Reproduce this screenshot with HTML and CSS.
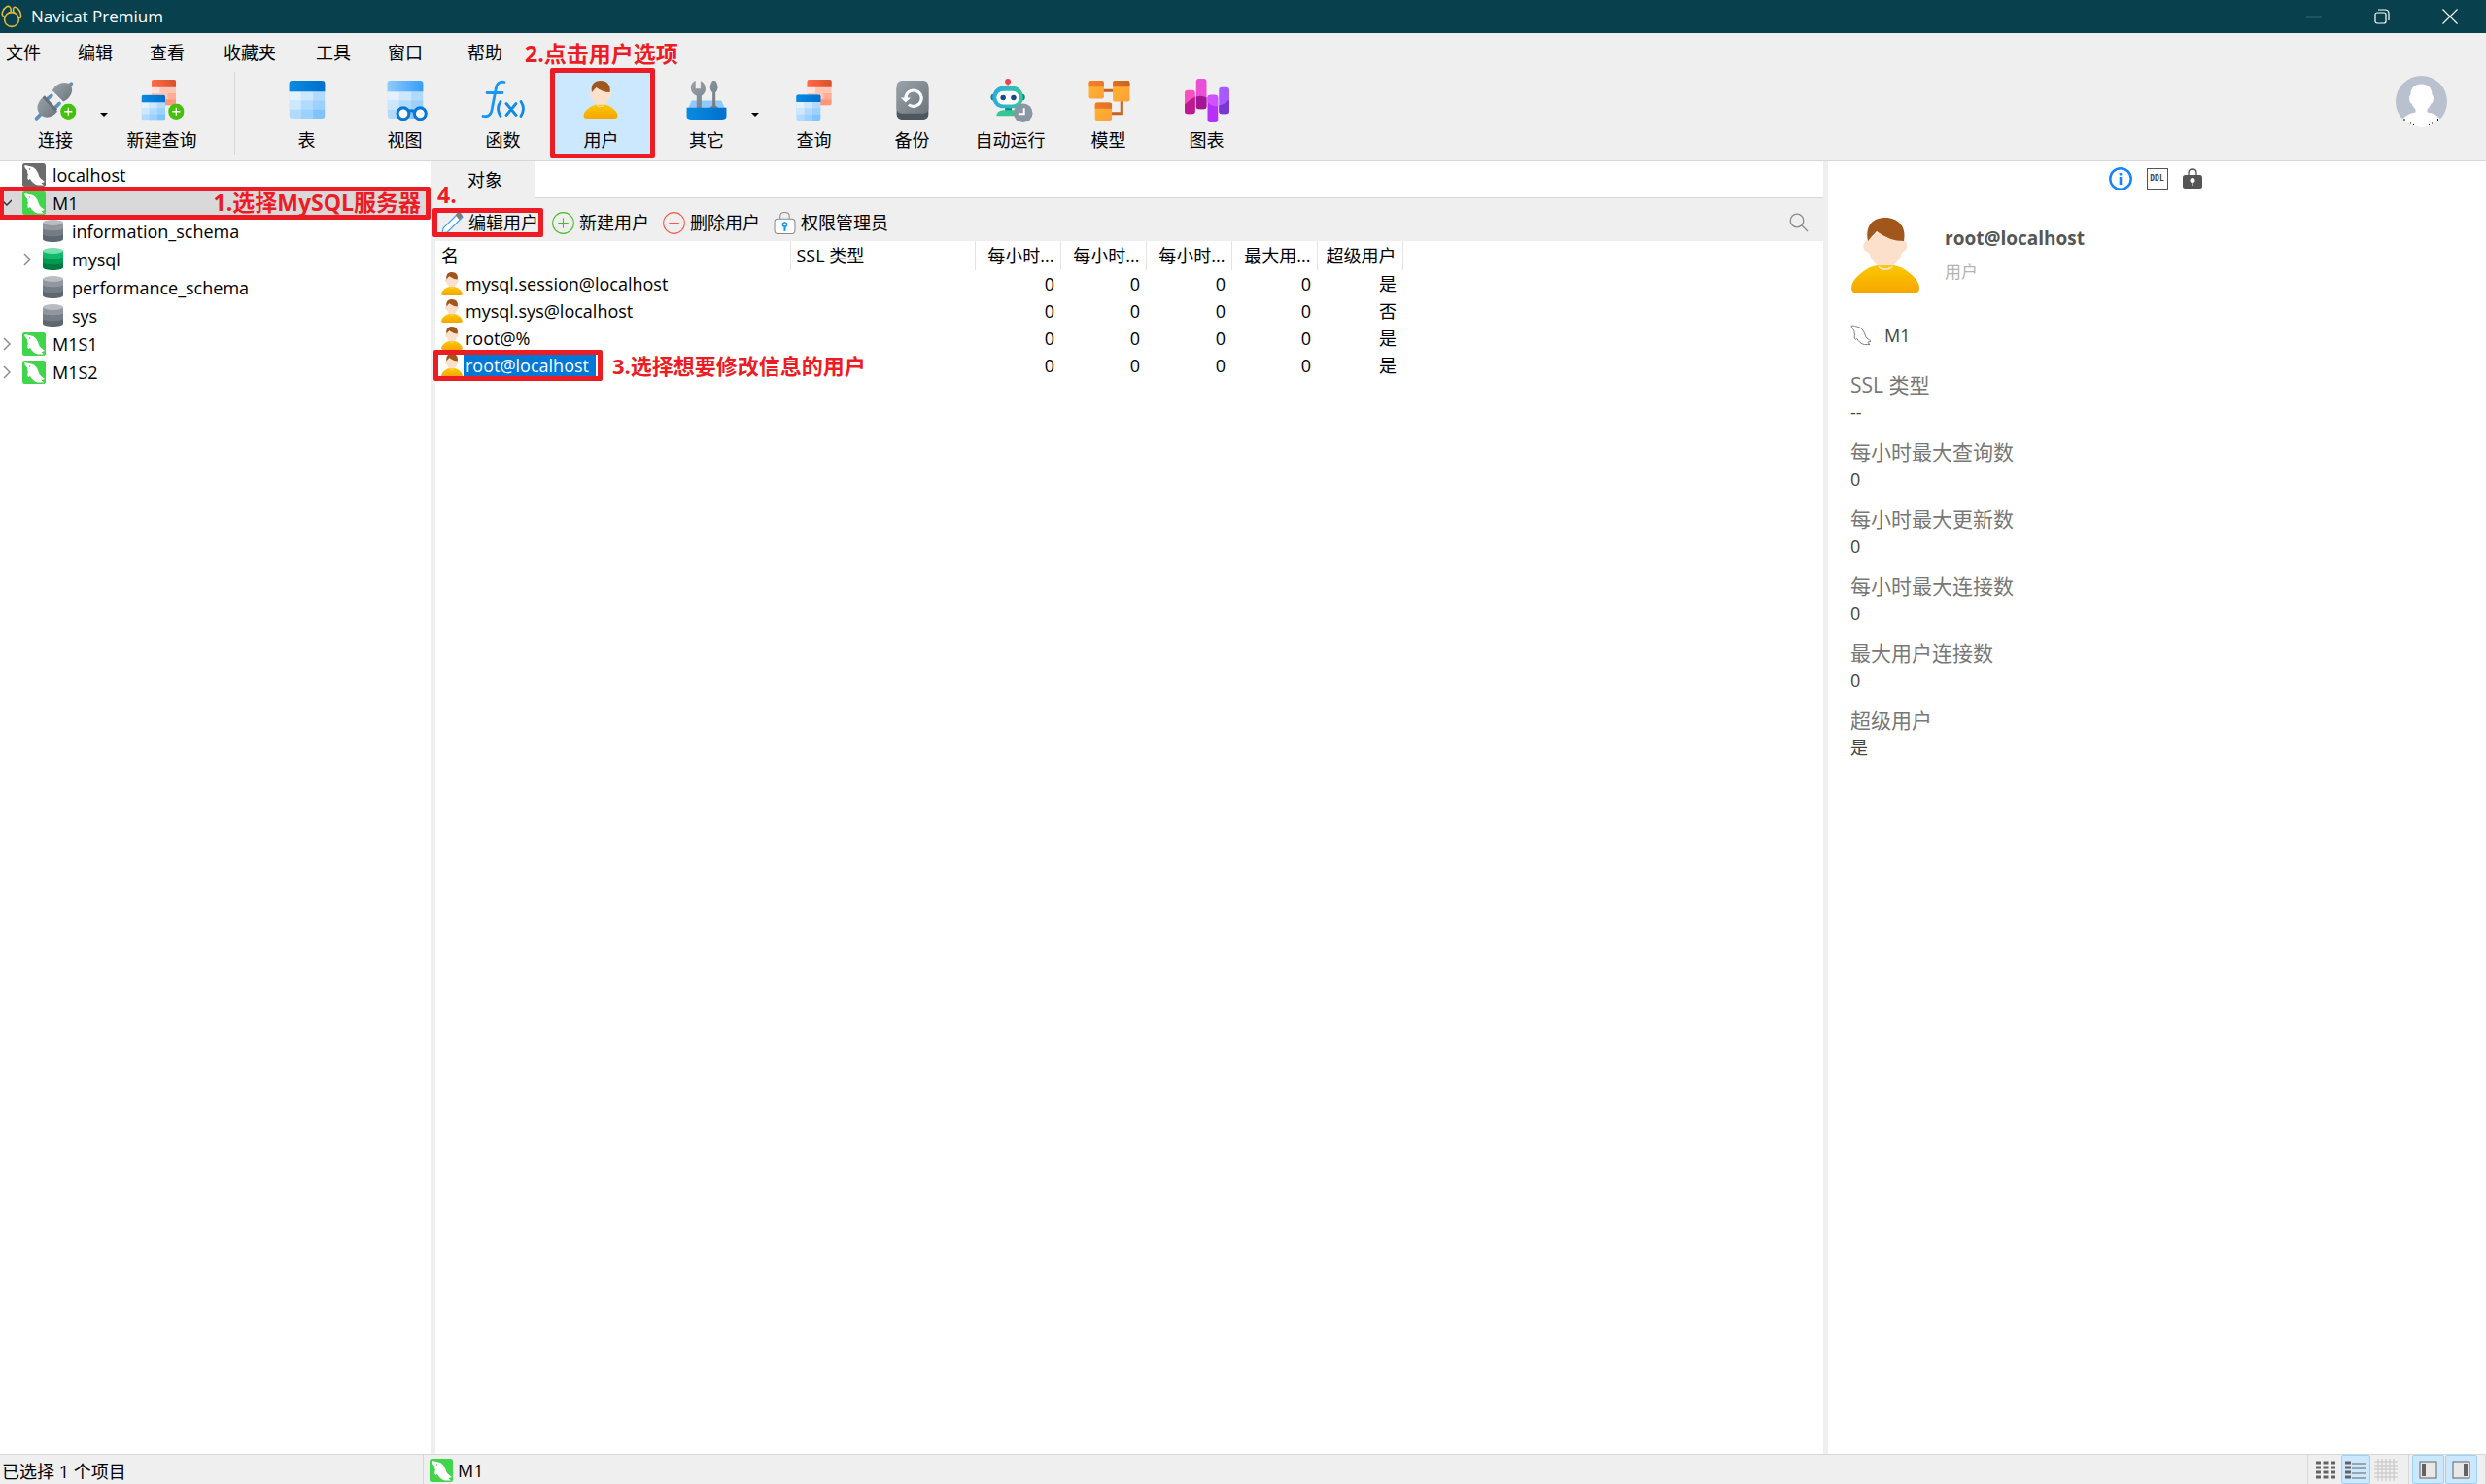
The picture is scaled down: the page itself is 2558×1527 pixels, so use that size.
FILE: index.html
```html
<!DOCTYPE html>
<html lang="zh-CN">
<head>
<meta charset="utf-8">
<title>Navicat Premium</title>
<link rel="stylesheet" href="styles.css">
</head>
<body>
<svg class="defs" aria-hidden="true">
  <defs>
    <linearGradient id="g-gray" x1="0" y1="0" x2="1" y2="1"><stop offset="0" stop-color="#9aa2aa"/><stop offset="1" stop-color="#6d757d"/></linearGradient>
    <linearGradient id="g-blue" x1="0" y1="0" x2="1" y2="0"><stop offset="0" stop-color="#0a8ae0"/><stop offset="1" stop-color="#0070cc"/></linearGradient>
    <linearGradient id="g-sky" x1="0" y1="0" x2="1" y2="0"><stop offset="0" stop-color="#90cafc"/><stop offset="1" stop-color="#369efa"/></linearGradient>
    <linearGradient id="g-red" x1="0" y1="0" x2="1" y2="0"><stop offset="0" stop-color="#ff6b47"/><stop offset="1" stop-color="#d9502c"/></linearGradient>
    <linearGradient id="g-shirt" x1="0" y1="0" x2="0" y2="1"><stop offset="0" stop-color="#fcc800"/><stop offset="1" stop-color="#f5a500"/></linearGradient>
    <linearGradient id="g-robot" x1="0" y1="0" x2="1" y2="0"><stop offset="0" stop-color="#2cabe2"/><stop offset="1" stop-color="#37c69a"/></linearGradient>
    <linearGradient id="g-orange" x1="0" y1="0" x2="1" y2="1"><stop offset="0" stop-color="#ffb62e"/><stop offset="1" stop-color="#ff9f3a"/></linearGradient>
    <linearGradient id="g-rust" x1="0" y1="0" x2="1" y2="0"><stop offset="0" stop-color="#f87f2b"/><stop offset="1" stop-color="#c9651f"/></linearGradient>
    <clipPath id="c-table"><rect width="36" height="38" rx="3"/></clipPath>
  </defs>
  <symbol id="i-logo" viewBox="0 0 22 24"><g fill="none" stroke="#e3b93c" stroke-width="1.6" stroke-linecap="round"><circle cx="11" cy="15" r="7.4"/><path d="M3 12C0 11 1 5 5 2.500C8 0 11 2 10 7.500M13 7.500C12 4 13 1.500 15 2.500C18 3 21 8 20.500 12.500C20 14 19 13.500 18.500 13"/></g></symbol>
  <symbol id="i-cells" viewBox="0 0 36 38"><g clip-path="url(#c-table)"><path fill="#b0dbff" d="M0 0h36v38H0z"/><path fill="#e4f2ff" d="M0 11h12v9H0z"/><path fill="#cde7ff" d="M12 11h12v9H12zM0 20h12v9H0z"/><path fill="#9cd0ff" d="M24 20h12v9H24zM12 29h12v9H12z"/><path fill="#7fc3ff" d="M24 29h12v9H24z"/></g></symbol>
  <symbol id="i-table" viewBox="0 0 36 38"><use href="#i-cells"/><path fill="url(#g-blue)" d="M0 11V3q0-3 3-3h30q3 0 3 3v8z"/></symbol>
  <symbol id="i-redtable" viewBox="0 0 36 38"><g clip-path="url(#c-table)"><path fill="#ffc5b5" d="M0 0h36v38H0z"/><path fill="#ffe4dd" d="M0 11h12v9H0z"/><path fill="#ffad97" d="M24 20h12v9H24z"/><path fill="#ff9678" d="M12 29h24v9H12z"/></g><path fill="url(#g-red)" d="M0 11V3q0-3 3-3h30q3 0 3 3v8z"/></symbol>
  <symbol id="i-plusdot" viewBox="0 0 16 16"><circle cx="8" cy="8" r="8" fill="#43c10b"/><path d="M8 4v8M4 8h8" stroke="#fff" stroke-width="1.300"/></symbol>
  <symbol id="i-connect" viewBox="0 0 44 44"><g transform="translate(1,1)"><g stroke="#5d93b9" stroke-width="3.600" stroke-linecap="round"><path d="M2 39l6-6M31 10l6-6M12 20l5-4M21 28l4-4"/></g><path fill="url(#g-gray)" d="M18 11C22 3 31 1 36 5c4 5 1 13-7 17z"/><path fill="url(#g-gray)" d="M9 17l14 15c-5 6-12 8-17 3S2 23 9 17z"/><path stroke="#68717a" stroke-width="3" d="M9 17l13 14"/></g><use href="#i-plusdot" x="27" y="25" width="16" height="16"/></symbol>
  <symbol id="i-newquery" viewBox="0 0 44 44"><use href="#i-redtable" x="11" y="1" width="25" height="26"/><use href="#i-table" x="1" y="16" width="24" height="26"/><use href="#i-plusdot" x="28" y="25" width="16" height="16"/></symbol>
  <symbol id="i-query" viewBox="0 0 44 44"><use href="#i-redtable" x="14" y="1" width="26" height="26"/><use href="#i-table" x="3" y="16" width="26" height="26"/></symbol>
  <symbol id="i-tables" viewBox="0 0 44 44"><use href="#i-table" x="3" y="2" width="38" height="38"/></symbol>
  <symbol id="i-view" viewBox="0 0 44 44"><use href="#i-cells" x="4" y="2" width="36" height="38"/><path fill="url(#g-sky)" d="M4 13V5q0-3 3-3h30q3 0 3 3v8z"/><g fill="#fff" stroke="#0878d6" stroke-width="3"><circle cx="20" cy="35" r="5.800"/><circle cx="37" cy="35" r="5.800"/><path d="M25 33q3-2 6 0"/></g></symbol>
  <symbol id="i-func" viewBox="0 0 46 44"><g fill="none" stroke="#1696fa" stroke-width="2.800" stroke-linecap="round"><path d="M24 3c-5-1-8 1-9 8l-4 21c-1 5-4 7-9 6M6 14h16"/><path stroke="#108be6" d="M20 23q-5 7 0 15M41 23q5 7 0 15M26 25l10 12M36 25L26 37"/></g></symbol>
  <symbol id="i-user" viewBox="0 0 70 78"><path fill="url(#g-shirt)" d="M26 49h18c10 2 18 9 23 15q3 4 3 8 0 6-7 6H7q-7 0-7-6 0-4 3-8c5-6 13-13 23-15z"/><path fill="#fde0cb" d="M27 49h16q-1 5-8 5t-8-5zM17 23c-5 1-6 8-3 11l4 2c2 8 10 16 17 16s15-8 17-16l3-2c3-3 3-9-1-11L34 10z"/><path fill="#a1571c" d="M17 24C14 8 22 0 35 0s22 9 19 24q-15 0-28-10-4 4-9 10z"/></symbol>
  <symbol id="i-other" viewBox="0 0 44 44"><path fill="#90cafc" d="M7 22h30l4 9H3z"/><path fill="url(#g-gray)" d="M12 30V17C4 14 5 4 11 2v8h5V2c6 3 7 12 1 15v13zM28 22V14c-4-4-2-9 0-12h3c2 3 4 8 0 12v13q1 1 4 3H24q3-2 4-3z"/><path fill="url(#g-blue)" d="M2 29h40v9q0 3-4 3H6q-4 0-4-3z"/></symbol>
  <symbol id="i-backup" viewBox="0 0 44 44"><rect x="6" y="5" width="32" height="36" rx="5" fill="#4f575e"/><rect x="6" y="2" width="32" height="33" rx="5" fill="url(#g-gray)"/><path d="M15 20a8 8 0 1 1 3 6" fill="none" stroke="#fff" stroke-width="3"/><path fill="#fff" d="M10 19h10l-5 5z"/></symbol>
  <symbol id="i-auto" viewBox="0 0 46 46"><path stroke="#68717a" d="M20 5v5"/><circle cx="20" cy="3" r="3" fill="#ef3f4a"/><rect x="2" y="16" width="36" height="7" rx="3" fill="#078a84"/><path fill="#0b8982" d="M17 28h7v8h-7z"/><rect x="4" y="8" width="32" height="23" rx="11" fill="url(#g-robot)"/><rect x="8" y="13" width="24" height="14" rx="7" fill="#fff"/><circle cx="15" cy="20" r="2.800" fill="#164a80"/><circle cx="26" cy="20" r="2.800" fill="#164a80"/><path fill="#36c594" d="M8 39q0-5 7-6h12v6z"/><circle cx="36" cy="36" r="10" fill="#8997a5"/><path d="M37 31v6h-6" fill="none" stroke="#fff" stroke-width="2"/></symbol>
  <symbol id="i-model" viewBox="0 0 44 44"><path d="M15 12h12M35 22v13H22" stroke="#c4641e" stroke-width="3" fill="none"/><g fill="url(#g-orange)"><rect x="2" y="2" width="15" height="18" rx="2"/><rect x="26" y="2" width="17" height="21" rx="2"/><rect x="8" y="24" width="17" height="18" rx="2"/></g><g fill="url(#g-rust)"><path d="M2 8V4q0-2 2-2h11q2 0 2 2v4zM26 8V4q0-2 2-2h13q2 0 2 2v4zM8 30v-4q0-2 2-2h13q2 0 2 2v4z"/></g></symbol>
  <symbol id="i-chart" viewBox="0 0 47 46"><rect x="0" y="12" width="11" height="25" rx="3" fill="#fa4fc0"/><path fill="#bb1a90" d="M0 27Q5 22 11 19v15q0 3-3 3H3q-3 0-3-3z"/><rect x="12" y="0" width="11" height="32" rx="3" fill="#ea50d6"/><path fill="#a31593" d="M12 19q6-2 11 1v9q0 3-3 3h-5q-3 0-3-3z"/><rect x="24" y="17" width="11" height="29" rx="3" fill="#b82ff8"/><path fill="#d052ff" d="M24 25v-5q0-3 3-3h5q3 0 3 3v9q-6 0-11-4z"/><rect x="36" y="9" width="11" height="28" rx="3" fill="#a65aff"/><path fill="#7737d0" d="M36 28q6-1 11-6v12q0 3-3 3h-5q-3 0-3-3z"/></symbol>
  <symbol id="i-dolphin" viewBox="0 0 24 24"><path d="M2 2.500C3.500 1.800 5 2.200 7 3c3 .3 5.500 1.500 7 3.500 2 2.500 2.500 5 3.500 7.500 1 2 3.500 3 5.500 5l-3.500 1.300L22 22.500c-2 .3-4-.3-6 0-3.500-.8-6-3-8-6.500-.6 0-.8 1-1.500 1-1.500-.5-1.500-3.500-.5-5.500C4.800 10.500 5.500 9 5 7.500 4 6 2.500 5 2 2.500z"/></symbol>
  <symbol id="i-server" viewBox="0 0 24 24"><rect width="24" height="24" rx="2.500" fill="currentColor"/><use href="#i-dolphin" fill="#fff"/><circle cx="7.500" cy="6" r=".8" fill="currentColor"/></symbol>
  <symbol id="i-db" viewBox="0 0 21 23"><path fill="#5e676f" d="M0 14h21v6c0 4-21 4-21 0z"/><path fill="#747d86" d="M0 8h21v7c0 3-21 3-21 0z"/><path fill="#92979f" d="M0 3h21v6c0 3-21 3-21 0z"/><ellipse cx="10.500" cy="3" rx="10.500" ry="3" fill="#b8bdc4"/></symbol>
  <symbol id="i-dbon" viewBox="0 0 21 23"><path fill="#007a3f" d="M0 14h21v6c0 4-21 4-21 0z"/><path fill="#009a52" d="M0 8h21v7c0 3-21 3-21 0z"/><path fill="#12b96a" d="M0 3h21v6c0 3-21 3-21 0z"/><ellipse cx="10.500" cy="3" rx="10.500" ry="3" fill="#78dfae"/></symbol>
  <symbol id="i-right" viewBox="0 0 10 16"><path d="M2 2l6 6-6 6" fill="none" stroke="#909090" stroke-width="1.500"/></symbol>
  <symbol id="i-down" viewBox="0 0 10 16"><path d="M0 5l5 5 5-5" fill="none" stroke="#333" stroke-width="1.500"/></symbol>
  <symbol id="i-pencil" viewBox="0 0 22 22"><path d="M1 21l1-5L17 1l4 4L6 20z" fill="#fff" stroke="#3ea2f5" stroke-width="1.200"/><path fill="#7d7d7d" d="M14 3l3-3q3 1 4 4l-3 4z"/></symbol>
  <symbol id="i-add" viewBox="0 0 22 22"><g fill="none" stroke="#43c121"><circle cx="11" cy="11" r="10.400"/><path d="M11 6v10M6 11h10"/></g></symbol>
  <symbol id="i-del" viewBox="0 0 22 22"><g fill="none" stroke="#fa5a4c"><circle cx="11" cy="11" r="10.400"/><path d="M6 11h10"/></g></symbol>
  <symbol id="i-priv" viewBox="0 0 22 22"><path d="M6.500 7V4q0-3.500 4.500-3.500T15.500 4v3" fill="none" stroke="#8b8b8b"/><rect x="1" y="7" width="20" height="14.500" rx="3" fill="#fff" stroke="#8b8b8b"/><path d="M11 14v5" stroke="#1896fb" stroke-width="2"/><circle cx="11" cy="12.500" r="2" fill="none" stroke="#1896fb" stroke-width="1.500"/></symbol>
  <symbol id="i-search" viewBox="0 0 20 20"><g fill="none" stroke="#8a8a8a" stroke-width="1.300"><circle cx="8" cy="8" r="6.800"/><path d="M13 13l6 6"/></g></symbol>
  <symbol id="i-info" viewBox="0 0 24 24"><circle cx="12" cy="12" r="10.700" fill="none" stroke="#1684fc" stroke-width="2.500"/><path d="M12 10v8M12 6v2.500" stroke="#1684fc" stroke-width="2.600"/></symbol>
  <symbol id="i-lock" viewBox="0 0 20 22"><path d="M6 8V5q0-4 4-4t4 4v3" fill="none" stroke="#555" stroke-width="1.300"/><rect y="7" width="20" height="14" rx="2.500" fill="#555"/><circle cx="10" cy="12.500" r="2.500" fill="#fff"/><path d="M10 13v5" stroke="#fff"/></symbol>
</svg>

<div class="app">
  <header class="titlebar">
    <svg class="logo"><use href="#i-logo"/></svg>
    <h1 class="title">Navicat Premium</h1>
    <div class="window-controls">
      <button type="button" aria-label="最小化"><svg viewBox="0 0 16 16"><path d="M0 8.500h16"/></svg></button>
      <button type="button" aria-label="还原"><svg viewBox="0 0 16 16"><rect x="1" y="4" width="11" height="11" rx="2"/><path d="M4 1h7q4 0 4 4v7"/></svg></button>
      <button type="button" aria-label="关闭"><svg viewBox="0 0 16 16"><path d="M.5.5l15 15M15.500.5l-15 15"/></svg></button>
    </div>
  </header>

  <div class="ribbon">
    <div class="ribbon-main">
      <nav class="menubar">
        <button type="button">文件</button><button type="button">编辑</button><button type="button">查看</button><button type="button">收藏夹</button><button type="button">工具</button><button type="button">窗口</button><button type="button">帮助</button>
      </nav>
      <div class="toolbar">
        <div class="split">
          <button type="button" class="tool"><svg><use href="#i-connect"/></svg>连接</button>
          <button type="button" class="drop" aria-label="连接选项"></button>
        </div>
        <button type="button" class="tool"><svg><use href="#i-newquery"/></svg>新建查询</button>
        <span class="divider"></span>
        <button type="button" class="tool"><svg><use href="#i-tables"/></svg>表</button>
        <button type="button" class="tool"><svg><use href="#i-view"/></svg>视图</button>
        <button type="button" class="tool"><svg><use href="#i-func"/></svg>函数</button>
        <div class="marked">
          <button type="button" class="tool active"><svg><use href="#i-user" x="4" y="2" width="36" height="39"/></svg>用户</button>
          <span class="mark mark-user"></span>
          <span class="note note-user">2.点击用户选项</span>
        </div>
        <div class="split">
          <button type="button" class="tool"><svg><use href="#i-other"/></svg>其它</button>
          <button type="button" class="drop" aria-label="其它选项"></button>
        </div>
        <button type="button" class="tool"><svg><use href="#i-query"/></svg>查询</button>
        <button type="button" class="tool"><svg><use href="#i-backup"/></svg>备份</button>
        <button type="button" class="tool"><svg><use href="#i-auto"/></svg>自动运行</button>
        <button type="button" class="tool"><svg><use href="#i-model"/></svg>模型</button>
        <button type="button" class="tool"><svg><use href="#i-chart"/></svg>图表</button>
      </div>
    </div>
    <button type="button" class="account" aria-label="账户"><svg viewBox="0 0 53 53"><circle cx="26.500" cy="26.500" r="26.500" fill="#b9c1cf"/><path fill="#fff" d="M26.500 8.500c8 0 11 5 11 11 2 1 2 8-1 9-1 3-3 5-4 6v3c7 1 11 4 13.500 7a26.500 26.500 0 0 1-39 0c3-3 7-6 13.500-7v-3c-1-1-3-3-4-6-3-1-3-8-1-9 0-6 3-11 11-11z"/><path d="M9 44v2M43.500 44v2M15 49h1M18 50.500h1M34 50.500h1M37 49h1" stroke="#000"/></svg></button>
  </div>

  <div class="workspace">
    <aside class="sidebar">
      <ul class="tree">
        <li class="node"><span class="twist"></span><svg class="server off"><use href="#i-server"/></svg>localhost</li>
        <li class="node selected"><svg class="twist"><use href="#i-down"/></svg><svg class="server"><use href="#i-server"/></svg>M1
          <span class="mark mark-server"></span><span class="note note-server">1.选择MySQL服务器</span></li>
        <li class="node child"><span class="twist"></span><svg class="db"><use href="#i-db"/></svg>information_schema</li>
        <li class="node child"><svg class="twist"><use href="#i-right"/></svg><svg class="db"><use href="#i-dbon"/></svg>mysql</li>
        <li class="node child"><span class="twist"></span><svg class="db"><use href="#i-db"/></svg>performance_schema</li>
        <li class="node child"><span class="twist"></span><svg class="db"><use href="#i-db"/></svg>sys</li>
        <li class="node"><svg class="twist"><use href="#i-right"/></svg><svg class="server"><use href="#i-server"/></svg>M1S1</li>
        <li class="node"><svg class="twist"><use href="#i-right"/></svg><svg class="server"><use href="#i-server"/></svg>M1S2</li>
      </ul>
    </aside>

    <main class="objects">
      <div class="tabs"><button type="button" class="tab">对象</button></div>
      <div class="actions">
        <div class="marked">
          <button type="button" class="action"><svg><use href="#i-pencil"/></svg>编辑用户</button>
          <span class="mark mark-edit"></span><span class="note note-edit">4.</span>
        </div>
        <button type="button" class="action"><svg><use href="#i-add"/></svg>新建用户</button>
        <button type="button" class="action"><svg><use href="#i-del"/></svg>删除用户</button>
        <button type="button" class="action"><svg><use href="#i-priv"/></svg>权限管理员</button>
        <button type="button" class="search" aria-label="搜索"><svg><use href="#i-search"/></svg></button>
      </div>
      <div class="list">
        <table class="users">
          <colgroup><col class="c-name"><col class="c-ssl"><col class="c-num"><col class="c-num"><col class="c-num"><col class="c-num"><col class="c-num"></colgroup>
          <thead><tr><th>名</th><th>SSL 类型</th><th>每小时...</th><th>每小时...</th><th>每小时...</th><th>最大用...</th><th>超级用户</th></tr></thead>
          <tbody>
            <tr><td><div class="name"><svg><use href="#i-user"/></svg><span>mysql.session@localhost</span></div></td><td></td><td>0</td><td>0</td><td>0</td><td>0</td><td>是</td></tr>
            <tr><td><div class="name"><svg><use href="#i-user"/></svg><span>mysql.sys@localhost</span></div></td><td></td><td>0</td><td>0</td><td>0</td><td>0</td><td>否</td></tr>
            <tr><td><div class="name"><svg><use href="#i-user"/></svg><span>root@%</span></div></td><td></td><td>0</td><td>0</td><td>0</td><td>0</td><td>是</td></tr>
            <tr><td><div class="name picked"><svg><use href="#i-user"/></svg><span>root@localhost</span><i class="mark mark-root"></i><b class="note note-root">3.选择想要修改信息的用户</b></div></td><td></td><td>0</td><td>0</td><td>0</td><td>0</td><td>是</td></tr>
          </tbody>
        </table>
      </div>
    </main>

    <aside class="details">
      <div class="detail-tabs">
        <button type="button" aria-label="信息"><svg width="24" height="24"><use href="#i-info"/></svg></button>
        <button type="button" class="ddl">DDL</button>
        <button type="button" aria-label="权限"><svg width="20" height="22"><use href="#i-lock"/></svg></button>
      </div>
      <div class="profile">
        <svg><use href="#i-user"/></svg>
        <div><h2>root@localhost</h2><p>用户</p></div>
      </div>
      <div class="source"><svg viewBox="1 1 23 23"><use href="#i-dolphin" width="24" height="24" fill="#fff" stroke="#777"/></svg>M1</div>
      <dl class="props">
        <dt>SSL 类型</dt><dd>--</dd>
        <dt>每小时最大查询数</dt><dd>0</dd>
        <dt>每小时最大更新数</dt><dd>0</dd>
        <dt>每小时最大连接数</dt><dd>0</dd>
        <dt>最大用户连接数</dt><dd>0</dd>
        <dt>超级用户</dt><dd>是</dd>
      </dl>
    </aside>
  </div>

  <footer class="statusbar">
    <span class="status-text">已选择 1 个项目</span>
    <span class="status-server"><svg class="server"><use href="#i-server"/></svg>M1</span>
    <div class="view-modes">
      <button type="button" aria-label="图标"><svg viewBox="0 0 24 24"><path d="M2 5h20M2 10h20M2 15h20M2 20h20" stroke="#636363" stroke-width="3" stroke-dasharray="5 2.500"/></svg></button>
      <button type="button" class="on" aria-label="列表"><svg viewBox="0 0 24 24"><path d="M1 5h6M1 10h6M1 15h6M1 20h6" stroke="#636363" stroke-width="3"/><path d="M8 6h15M8 11h15M8 16h15M8 21h15" stroke="#636363"/></svg></button>
      <button type="button" aria-label="网格"><svg viewBox="0 0 24 24"><path d="M0 4h24M0 8h24M0 12h24M0 16h24M0 20h24M4 1v23M8 1v23M12 1v23M16 1v23M20 1v23" stroke="#c4c4c4"/></svg></button>
    </div>
    <div class="panels">
      <button type="button" class="on" aria-label="左侧面板"><svg viewBox="0 0 24 24"><rect x="3" y="4" width="17" height="17" fill="#e8e8e8" stroke="#636363"/><path fill="#636363" d="M5 6h4v13H5z"/></svg></button>
      <button type="button" class="on" aria-label="右侧面板"><svg viewBox="0 0 24 24"><rect x="3" y="4" width="17" height="17" fill="#e8e8e8" stroke="#636363"/><path fill="#636363" d="M14 6h4v13h-4z"/></svg></button>
    </div>
  </footer>
</div>
</body>
</html>
```

FILE: styles.css
```css
:root {
  --chrome: #efefef;
  --line: #d7d7d7;
  --red: #ed1c24;
  --pick: #cce8ff;
}

* { box-sizing: border-box; }

body {
  margin: 0;
  color: #000;
  background: #fff;
  font: 18px/24px "Open Sans", "Noto Sans CJK SC", sans-serif;
}

button {
  padding: 0;
  border: 0;
  background: none;
  color: inherit;
  font: inherit;
  white-space: nowrap;
}

h1, h2, p, ul, dl, dd { margin: 0; padding: 0; }
svg { display: block; flex: none; }
.defs { position: absolute; width: 0; height: 0; }

.app { display: flex; flex-direction: column; min-height: 100vh; }

/* Title bar */
.titlebar { display: flex; align-items: center; height: 34px; background: #08414d; color: #fff; }
.logo { width: 22px; height: 24px; margin: 0 9px 0 1px; }
.title { font-size: 17px; font-weight: 400; }
.window-controls { display: flex; margin-left: auto; padding-right: 2px; }
.window-controls button { width: 70px; height: 34px; display: grid; place-items: center; }
.window-controls svg { width: 16px; height: 16px; fill: none; stroke: #fff; stroke-width: 1.2; }

/* Menus and main toolbar */
.ribbon { display: flex; justify-content: space-between; background: var(--chrome); border-bottom: 1px solid var(--line); }
.menubar { display: grid; grid-template-columns: 74px 74px 76px 95px 74px 82px 40px; height: 40px; padding-left: 6px; }
.menubar button { text-align: left; }
.toolbar { display: flex; align-items: flex-start; height: 91px; }
.tool { width: 101px; height: 84px; display: flex; flex-direction: column; align-items: center; gap: 6px; padding-top: 7px; }
.tool svg { width: 46px; height: 45px; }
.split { display: flex; padding-left: 16px; }
.split .tool { width: 82px; }
.marked + .split { margin: 0 1px; }
.drop { width: 18px; display: grid; place-items: center; height: 84px; }
.drop::before { content: ""; margin-top: 4px; border: 4px solid transparent; border-top-color: #000; border-bottom: 0; }
.divider { width: 1px; height: 86px; margin: 0 23px 0 24px; background: var(--line); }
.tool.active { background: var(--pick); }
.account { width: 53px; margin: 9px 40px 0 0; align-self: center; }

/* Red call-outs drawn over the window */
.marked { position: relative; }
.mark { position: absolute; border: 5px solid var(--red); border-radius: 2px; pointer-events: none; }
.note { position: absolute; color: var(--red); font-size: 23px; line-height: 28px; font-weight: 700; font-style: normal; white-space: nowrap; }
.mark-user { inset: -4px -5px -5px -2px; }
.note-user { left: -28px; top: -33px; }
.mark-server { inset: -2px 0 -3px -1px; }
.note-server { right: 10px; top: 0; }
.mark-edit { inset: -3px -5px -3px -9px; }
.note-edit { left: -4px; top: -31px; }
.mark-root { inset: -5px auto -5px -6px; width: 174px; }
.note-root { left: 176px; top: -3px; font-size: 22px; }

/* Workspace */
.workspace { flex: 1; display: grid; grid-template-columns: 443px minmax(0, 1433fr) minmax(0, 682fr); }

.tree { list-style: none; margin-top: -1px; }
.node { position: relative; display: flex; align-items: center; height: 29px; padding-left: 2px; }
.node.child { padding-left: 23px; }
.node.selected { background: #d9d9d9; }
.twist { width: 10px; height: 16px; margin-right: 11px; }
.server { width: 24px; height: 24px; margin-right: 7px; color: #40d54a; }
.server.off { color: #6b6b6b; }
.db { width: 21px; height: 23px; margin-right: 9px; }

.objects { display: flex; flex-direction: column; }
.tabs { display: flex; height: 38px; background: #fff; }
.tabs::after { content: ""; flex: 1; border: solid var(--line); border-width: 0 0 1px 1px; }
.tab { width: 107px; padding-left: 5px; background: var(--chrome); }
.actions { display: flex; align-items: center; gap: 14px; height: 44px; padding: 6px 15px 0 11px; background: var(--chrome); }
.action { display: flex; align-items: center; gap: 5px; }
.action svg { width: 23px; height: 23px; }
.search { margin-left: auto; }
.search svg { width: 20px; height: 20px; }
.list { flex: 1; border-left: 5px solid var(--chrome); }

.users { width: 995px; table-layout: fixed; border-collapse: collapse; text-align: right; }
.c-name { width: 365px; }
.c-ssl { width: 190px; }
.c-num { width: 88px; }
.users th { height: 30px; padding: 0 6px; border-right: 1px solid #e3e3e3; font-weight: 400; white-space: nowrap; }
.users th:nth-child(-n+2) { text-align: left; }
.users td { height: 28px; padding: 0 6px; }
.name { position: relative; display: flex; align-items: center; height: 22px; gap: 1px; }
.name svg { width: 22px; height: 24px; }
.name span { padding: 0 2px; line-height: 22px; }
.name.picked span { padding-right: 7px; background: #0078d7; color: #fff; }
.mark-root { left: -8px; }

/* Details pane */
.details { padding: 6px 24px 6px 23px; border-left: 5px solid var(--chrome); color: #444; }
.detail-tabs { display: flex; align-items: center; justify-content: center; gap: 15px; height: 24px; padding-right: 3px; }
.ddl { width: 22px; height: 22px; border: 1px solid #555; font: 700 8px/20px "DejaVu Sans Mono", monospace; color: #444; }
.profile { display: flex; gap: 26px; padding: 28px 1px 0; }
.profile svg { width: 70px; height: 78px; }
.profile h2 { margin-top: 6px; font-size: 19px; line-height: 30px; color: #555; }
.profile p { margin-top: 8px; font-size: 17px; color: #b4b4b4; }
.source { display: flex; align-items: center; gap: 13px; height: 24px; margin-top: 31px; }
.source svg { width: 22px; height: 22px; }
.props { margin-top: 24px; }
.props dt { font-size: 21px; line-height: 30px; color: #777; }
.props dd { line-height: 26px; margin-bottom: 13px; }

/* Status bar */
.statusbar { display: flex; height: 31px; border-top: 1px solid var(--line); background: var(--chrome); }
.status-text { width: 435px; padding: 5px 2px 0; }
.status-server { display: flex; align-items: center; padding: 2px 0 0 6px; border-left: 1px solid var(--line); }
.status-server .server { margin-right: 5px; }
.view-modes, .panels { display: flex; gap: 1px; border-left: 1px solid var(--line); }
.view-modes { margin-left: auto; padding: 0 8px 0 3px; }
.panels { border-right: 1px solid var(--line); padding: 0 8px 0 3px; }
.statusbar button { width: 30px; display: grid; place-items: center; border: 1px solid transparent; border-radius: 2px; }
.panels button { width: 33px; }
.statusbar button.on { background: var(--pick); border-color: #99d1ff; }
.statusbar button svg { width: 24px; height: 24px; }
```
